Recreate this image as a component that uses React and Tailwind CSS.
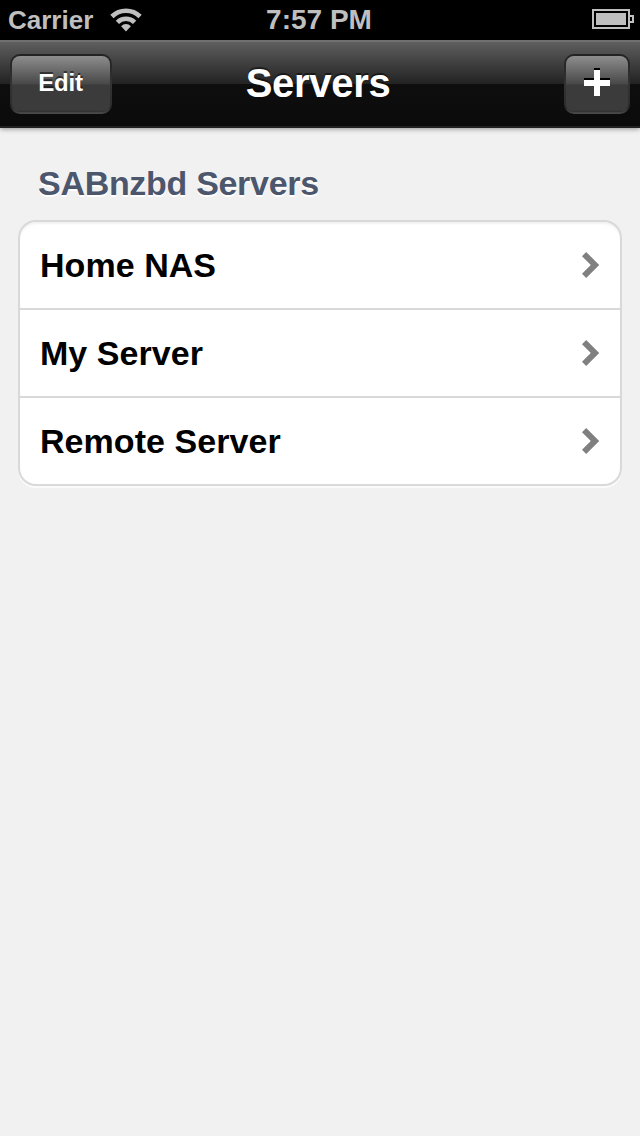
const servers = ["Home NAS", "My Server", "Remote Server"];

function WifiIcon() {
  return (
    <svg width="32" height="24" viewBox="0 0 32 24" fill="none" stroke="#bfbfbf" className="ml-[17px] mt-[8px]">
      <path d="M1.9 8.5a20 20 0 0 1 28.2 0" strokeWidth="4.6" />
      <path d="M7.4 14.3a12.2 12.2 0 0 1 17.2 0" strokeWidth="4.6" />
      <path d="M11.1 18.2a6.6 6.6 0 0 1 9.8 0L16 23.4z" fill="#bfbfbf" stroke="none" />
    </svg>
  );
}

function BatteryIcon() {
  return (
    <svg width="42" height="20" viewBox="0 0 42 20" fill="none" shapeRendering="crispEdges" className="mr-[6px] mt-[9px]">
      <rect x="1" y="1" width="36" height="18" stroke="#bfbfbf" strokeWidth="2" />
      <rect x="4" y="4" width="30" height="12" fill="#bfbfbf" />
      <path d="M38 7h3v6h-3" stroke="#bfbfbf" strokeWidth="2" />
    </svg>
  );
}

function BarButton({ className, label, children }) {
  return (
    <button
      aria-label={label}
      className={`-mt-[2px] flex h-[60px] items-center justify-center rounded-[10px] border-2 border-transparent [background:linear-gradient(#8e8e8e_0px,#484848_28px,#3b3b3b_29px,#3b3b3b_54px,#303030_56px)_padding-box,linear-gradient(#222_0px,#333_30px,#2c2c2c_54px,#4c4c4c_60px)_border-box] ${className}`}
    >
      {children}
    </button>
  );
}

function PlusIcon() {
  return (
    <svg width="26" height="30" viewBox="0 0 26 30" shapeRendering="crispEdges" className="-mt-[2px]">
      <path d="M10 0h6v10h10v6H16v10h-6V16H0v-6h10z" fill="#000" />
      <path d="M10 2h6v10h10v6H16v10h-6V18H0v-6h10z" fill="#fff" />
    </svg>
  );
}

function Chevron() {
  return (
    <svg width="18" height="26" viewBox="0 0 18 26" fill="#808080">
      <path d="M4.2 0L17.2 13L4.2 26L0 21.8L8.8 13L0 4.2z" />
    </svg>
  );
}

export default function App() {
  return (
    <div className="min-h-[1136px] w-[640px] bg-[#f1f1f1] font-['Liberation_Sans',Arial,sans-serif] font-bold">
      <div className="grid h-10 grid-cols-[1fr_auto_1fr] bg-black text-[#bfbfbf]">
        <div className="flex items-start pl-[8px]">
          <span className="text-[26px] leading-[40px]">Carrier</span>
          <WifiIcon />
        </div>
        <span className="-ml-[2px] text-[28px] leading-[39px]">7:57 PM</span>
        <div className="flex items-start justify-end">
          <BatteryIcon />
        </div>
      </div>
      <header className="grid h-[88px] grid-cols-[1fr_auto_1fr] items-center border-t-2 border-[#707070] bg-[linear-gradient(#5e5e5e_0px,#222_42px,#0e0e0e_42px,#0b0b0b_84px,#222_84px,#222_86px)] px-[10px] text-white shadow-[0_1px_5px_rgba(0,0,0,0.4)]">
        <BarButton className="w-[102px] text-[24px] tracking-[-0.2px] [text-shadow:0_-2px_0_rgba(0,0,0,0.5)]">
          <span className="-mt-[2px] -ml-[1px]">Edit</span>
        </BarButton>
        <h1 className="-mt-[3px] -ml-[4px] text-[40px] leading-[85px] tracking-[-0.3px] [text-shadow:0_-2px_0_rgba(0,0,0,0.5)]">Servers</h1>
        <BarButton className="w-[66px] justify-self-end" label="Add server">
          <PlusIcon />
        </BarButton>
      </header>
      <main className="px-[18px] pt-[35px]">
        <h2 className="pl-[20px] text-[34px] leading-[40px] tracking-[-0.3px] text-[#4c566c] [text-shadow:0_2px_0_#fff]">
          SABnzbd Servers
        </h2>
        <ul className="mt-[17px] divide-y-2 divide-[#d9d9d9] overflow-hidden rounded-[18px] border-2 border-[#d9d9d9] bg-white shadow-[0_2px_0_#fafafa,inset_0_2px_2px_#f2f2f2]">
          {servers.map((name) => (
            <li key={name} className="flex h-[88px] items-center justify-between pr-[20px] pl-[20px] text-[34px] leading-[86px] tracking-[0.05px] text-black last:h-[86px]">
              <span>{name}</span>
              <Chevron />
            </li>
          ))}
        </ul>
      </main>
    </div>
  );
}
